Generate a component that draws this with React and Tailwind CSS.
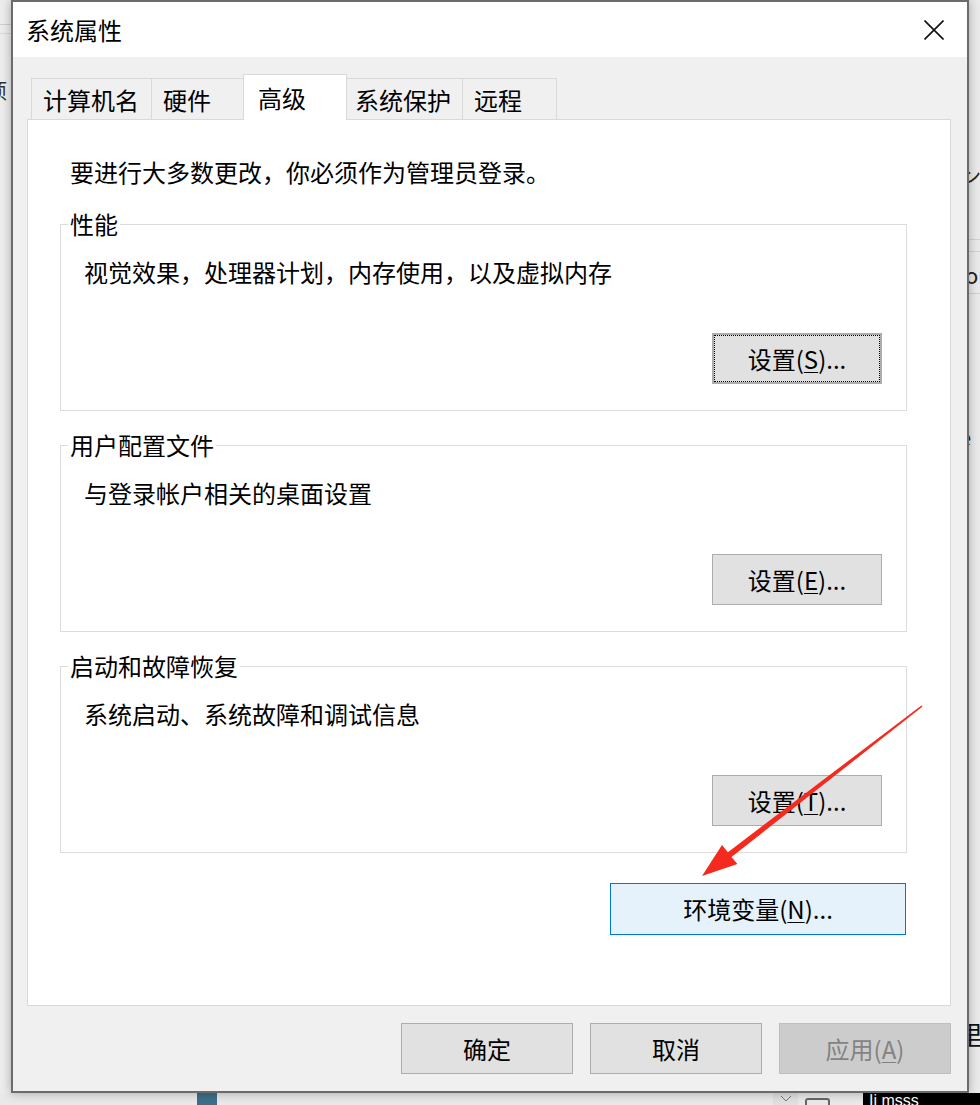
import React from "react";

const font = "font-['Noto_Sans_CJK_SC','Noto_Sans',sans-serif]";

const U = ({ children }) => (
  <span className="underline decoration-1 underline-offset-[3px]">{children}</span>
);

const Btn = ({ children, className = "" }) => (
  <button
    className={`h-[51px] bg-[#e1e1e1] border border-[#adadad] text-[24px] leading-none text-black ${className}`}
  >
    {children}
  </button>
);

const tabs = [
  { label: "计算机名", cls: "w-[121px] pl-[11px]" },
  { label: "硬件", cls: "w-[93px] pl-[11px]" },
  { label: "高级", cls: "w-[104px] pl-[14px]", active: true },
  { label: "系统保护", cls: "w-[117px] pl-[8px]" },
  { label: "远程", cls: "w-[95px] pl-[11px]" },
];

const Group = ({ title, text, button, className = "" }) => (
  <fieldset className={`border border-[#dcdcdc] ${className}`}>
    <legend className="ml-[7px] px-[2px] text-[24px] leading-[32px]">{title}</legend>
    <p className="mt-[16px] pl-[23px] text-[24px] leading-[32px]">{text}</p>
    <div className="flex justify-end mt-[45px] pr-[24px] pb-[26px]">{button}</div>
  </fieldset>
);

export default function App() {
  return (
    <div className={`relative w-[980px] h-[1105px] overflow-hidden bg-[#e9e9e9] text-black ${font}`}>
      <div className="flex h-[1093px]">
        {/* left edge of the desktop behind */}
        <div className="w-[11px] overflow-hidden bg-[#ededed]">
          <div className="w-[40px]">
            <div className="h-[25px] border-b border-[#cfcfcf]" />
            <div className="h-[9px] border-b border-[#dadada]" />
            <div className="mt-[45px] -ml-[13px] text-[20px] leading-[24px] text-[#333]">项</div>
          </div>
        </div>

        {/* the dialog window */}
        <div className="relative z-10 w-[958px] h-[1093px] flex flex-col border-2 border-[#6b6b6b] bg-[#f0f0f0] shadow-[0_0_10px_rgba(0,0,0,0.3)]">
          <div className="h-[55px] shrink-0 bg-white flex items-center justify-between pl-[13px] pr-[23px]">
            <span className="text-[24px] leading-none">系统属性</span>
            <svg width="20" height="20" viewBox="0 0 20 20">
              <path d="M0.5 0.5 L19.5 19.5 M19.5 0.5 L0.5 19.5" stroke="#111" strokeWidth="1.6" fill="none" />
            </svg>
          </div>

          <div className="mt-[17px] ml-[18px] h-[45px] flex items-end">
            {tabs.map((t, i) =>
              t.active ? (
                <div
                  key={t.label}
                  className={`relative z-10 -ml-px -mb-px h-[46px] flex items-center bg-white border border-b-0 border-[#d9d9d9] text-[24px] leading-none ${t.cls}`}
                >
                  {t.label}
                </div>
              ) : (
                <div
                  key={t.label}
                  className={`h-[41px] flex items-center pt-[2px] bg-[#f0f0f0] border border-b-0 border-[#d9d9d9] text-[24px] leading-none ${i > 0 ? "-ml-px" : ""} ${t.cls}`}
                >
                  {t.label}
                </div>
              )
            )}
          </div>

          <div className="ml-[14px] w-[924px] h-[887px] shrink-0 border border-[#d9d9d9] bg-white">
            <p className="mt-[36px] ml-[42px] text-[24px] leading-[32px]">
              要进行大多数更改，你必须作为管理员登录。
            </p>

            <div className="ml-[32px] w-[847px]">
              <Group
                className="mt-[20px]"
                title="性能"
                text="视觉效果，处理器计划，内存使用，以及虚拟内存"
                button={
                  <Btn className="w-[170px] border-2 border-[#0078d7] outline-1 outline-dotted outline-black -outline-offset-3">
                    设置(<U>S</U>)...
                  </Btn>
                }
              />
              <Group
                className="mt-[18px]"
                title="用户配置文件"
                text="与登录帐户相关的桌面设置"
                button={<Btn className="w-[170px]">设置(<U>E</U>)...</Btn>}
              />
              <Group
                className="mt-[18px]"
                title="启动和故障恢复"
                text="系统启动、系统故障和调试信息"
                button={<Btn className="w-[170px]">设置(<U>T</U>)...</Btn>}
              />

              <div className="mt-[30px] flex justify-end">
                <button className="mr-[1px] w-[296px] h-[52px] bg-[#e5f1fb] border border-[#0078d7] text-[24px] leading-none">
                  环境变量(<U>N</U>)...
                </button>
              </div>
            </div>
          </div>

          <div className="mt-[17px] pr-[16px] flex justify-end gap-[17px]">
            <Btn className="w-[172px]">确定</Btn>
            <Btn className="w-[172px]">取消</Btn>
            <button className="w-[172px] h-[51px] bg-[#cccccc] border border-[#bfbfbf] text-[24px] leading-none text-[#838383]">
              应用(<U>A</U>)
            </button>
          </div>
        </div>

        {/* right edge of the desktop behind */}
        <div className="w-[11px] overflow-hidden bg-[#ebebeb]">
          <div className="w-[60px] text-[20px] leading-[24px] text-[#222]">
            <div className="h-[164px]" />
            <div className="h-[24px] -ml-[8px]">ン</div>
            <div className="h-[52px] border-b border-[#d2d2d2]" />
            <div className="h-[12px] border-b border-[#d2d2d2]" />
            <div className="h-[42px] border-b border-[#d2d2d2] -ml-[4px] pt-[10px] text-[22px]">or</div>
            <div className="h-[130px]" />
            <div className="h-[24px] -ml-[10px] text-[22px]">e</div>
            <div className="h-[574px]" />
            <div className="h-[28px] -ml-[12px] text-[26px] text-[#111]">里</div>
          </div>
        </div>
      </div>

      {/* strip of the desktop below the window */}
      <div className="flex h-[12px]">
        <div className="ml-[197px] w-[20px] bg-[#3d6f8a]" />
        <div className="ml-[556px] w-[25px] bg-[#e0e0e0] flex justify-center pt-[2px]">
          <svg width="12" height="7" viewBox="0 0 12 7">
            <path d="M1 1 L6 6 L11 1" stroke="#777" strokeWidth="1" fill="none" />
          </svg>
        </div>
        <div className="ml-[7px] w-[25px] pt-[5px]">
          <div className="h-[10px] border-2 border-b-0 border-[#666] rounded-t-[3px]" />
        </div>
        <div className="ml-[33px] flex-1 bg-black overflow-hidden">
          <div className="pl-[6px] -mt-[2px] text-[16px] leading-[20px] text-white font-['Liberation_Sans',sans-serif]">
            Ii msss
          </div>
        </div>
      </div>

      {/* red annotation arrow */}
      <svg
        className="absolute inset-0 z-20 pointer-events-none"
        width="980"
        height="1105"
        viewBox="0 0 980 1105"
      >
        <polygon
          points="921.4,705.4 727.9,852.2 722,845 702,876 737.4,864 731.5,857 922.6,706.6"
          fill="#f52a1f"
        />
      </svg>
    </div>
  );
}
